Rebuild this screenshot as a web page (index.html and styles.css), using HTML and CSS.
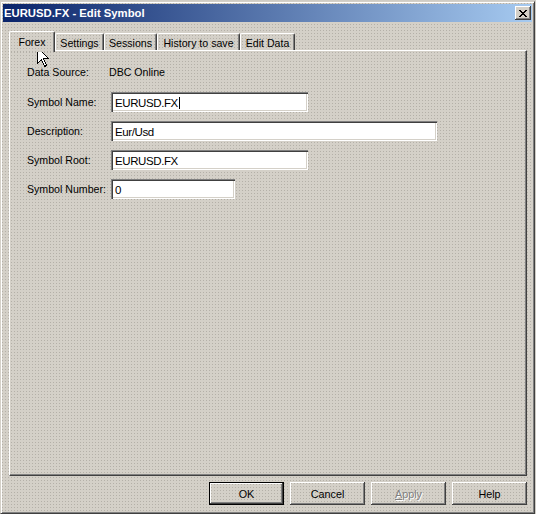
FILE: index.html
```html
<!DOCTYPE html>
<html lang="en">

<head>
  <meta charset="UTF-8" />
  <title>EURUSD.FX - Edit Symbol</title>
  <link rel="stylesheet" href="styles.css">
</head>

<body>
  <div class="window textured">
    <div class="titlebar">
      <span class="title">EURUSD.FX - Edit Symbol</span>
      <div class="close_button">
        <svg width="8" height="7" viewBox="0 0 8 7" shape-rendering="crispEdges">
          <path d="M0 0h2v1h-2zM6 0h2v1h-2zM1 1h2v1h-2zM5 1h2v1h-2zM2 2h4v1h-4zM3 3h2v1h-2zM2 4h4v1h-4zM1 5h2v1h-2zM5 5h2v1h-2zM0 6h2v1h-2zM6 6h2v1h-2z" fill="#000" />
        </svg>
      </div>
    </div>

    <div class="dialog">
      <div class="tabs">
        <div class="tab active textured">Forex</div>
        <div class="tab textured w-settings">Settings</div>
        <div class="tab textured w-sessions">Sessions</div>
        <div class="tab textured w-history">History to save</div>
        <div class="tab textured w-edit">Edit Data</div>
      </div>

      <div class="panel textured">
        <div class="row info">
          <span class="label">Data Source:</span>
          <span class="value">DBC Online</span>
        </div>

        <div class="row">
          <label class="label" for="symbolName">Symbol Name:</label>
          <div class="field w-name" id="symbolName">EURUSD.FX<span class="caret"></span></div>
        </div>

        <div class="row">
          <label class="label" for="description">Description:</label>
          <div class="field w-desc" id="description">Eur/Usd</div>
        </div>

        <div class="row">
          <label class="label" for="symbolRoot">Symbol Root:</label>
          <div class="field w-name" id="symbolRoot">EURUSD.FX</div>
        </div>

        <div class="row">
          <label class="label" for="symbolNumber">Symbol Number:</label>
          <div class="field w-number" id="symbolNumber">0</div>
        </div>
      </div>

      <div class="buttons">
        <div class="button default textured">OK</div>
        <div class="button textured">Cancel</div>
        <div class="button disabled textured"><span class="underline">A</span>pply</div>
        <div class="button textured">Help</div>
      </div>
    </div>
  </div>

  <!-- mouse pointer over the Forex tab -->
  <svg class="cursor" width="13" height="21" viewBox="0 0 13 21" shape-rendering="crispEdges">
    <path d="M0.5 0.5 L0.5 16.5 L4.5 12.5 L7.5 19.5 L9.5 18.5 L6.5 11.5 L11.5 11.5 Z" fill="#fff" stroke="#000" stroke-width="1" />
  </svg>
</body>

</html>
```

FILE: styles.css
```css
body {
  font-family: "Liberation Sans", Arial, sans-serif;
  font-size: 10.6px;
  color: #000;
  margin: 0;
  background: #cfccc5;
  overflow: hidden;
}

.textured {
  background-color: #d4d0c8;
  background-image: radial-gradient(circle, #b4b0a8 0.6px, transparent 0.9px);
  background-size: 3px 3px;
}

.window {
  width: 535px;
  height: 513px;
  margin-top: 1px;
  box-sizing: border-box;
  border: 1px solid;
  border-color: #d4d0c8 #404040 #404040 #d4d0c8;
  box-shadow: inset 1px 1px #fff, inset -1px -1px #808080;
  padding: 2px;
  display: flex;
  flex-direction: column;
}

.titlebar {
  height: 18px;
  flex-shrink: 0;
  background: linear-gradient(to right, #0a246a, #a6caf0);
  display: flex;
  align-items: center;
  justify-content: space-between;
  padding: 0 1px 0 1px;
}

.title {
  color: #fff;
  font-weight: bold;
  font-size: 11.3px;
}

.close_button {
  width: 16px;
  height: 14px;
  box-sizing: border-box;
  background: #d4d0c8;
  box-shadow: inset -1px -1px #404040, inset 1px 1px #fff, inset -2px -2px #808080;
  display: flex;
  align-items: center;
  justify-content: center;
  padding-right: 1px;
}

.dialog {
  flex: 1;
  display: flex;
  flex-direction: column;
  padding: 9px 5px 6px 6px;
}

.tabs {
  display: flex;
  align-items: flex-end;
  height: 19px;
  padding-left: 2px;
  position: relative;
  z-index: 1;
}

.tab {
  height: 17px;
  box-sizing: border-box;
  border-top: 1px solid #fff;
  border-left: 1px solid #fff;
  border-right: 1px solid #404040;
  box-shadow: inset -1px 0 #808080;
  border-radius: 2px 2px 0 0;
  display: flex;
  justify-content: center;
  align-items: center;
  padding-top: 2px;
}

.tab.active {
  width: 46px;
  height: 21px;
  margin-left: -2px;
  margin-bottom: -2px;
  padding-top: 0;
  padding-bottom: 1px;
}

.w-settings {
  width: 49px;
}

.w-sessions {
  width: 53px;
}

.w-history {
  width: 83px;
}

.w-edit {
  width: 55px;
}

.panel {
  flex: 1;
  border: 1px solid;
  border-color: #fff #404040 #404040 #fff;
  box-shadow: inset -1px -1px #808080;
  padding: 11px 0 0 17px;
  display: flex;
  flex-direction: column;
}

.row {
  display: flex;
  align-items: center;
  height: 20px;
  margin-bottom: 9px;
}

.row.info {
  margin-bottom: 10px;
}

.label {
  width: 84px;
  flex-shrink: 0;
}

.value {
  margin-left: -2px;
}

.field {
  height: 20px;
  box-sizing: border-box;
  background: #fff;
  box-shadow: inset 1px 1px #808080, inset 2px 2px #404040, inset -1px -1px #fff, inset -2px -2px #d4d0c8;
  padding: 1px 4px 0;
  display: flex;
  align-items: center;
  font-size: 11.5px;
  letter-spacing: -0.4px;
}

.w-name {
  width: 197px;
}

.w-desc {
  width: 326px;
}

.w-number {
  width: 124px;
}

.caret {
  display: inline-block;
  width: 1px;
  height: 12px;
  background: #000;
  margin-left: 1px;
}

.buttons {
  display: flex;
  justify-content: flex-end;
  gap: 6px;
  margin-top: 6px;
}

.button {
  width: 75px;
  height: 23px;
  box-sizing: border-box;
  box-shadow: inset -1px -1px #404040, inset 1px 1px #fff, inset -2px -2px #808080;
  display: flex;
  align-items: center;
  justify-content: center;
  font-size: 10.8px;
}

.button.default {
  border: 1px solid #000;
}

.button.disabled {
  color: #808080;
  text-shadow: 1px 1px #fff;
}

.underline {
  text-decoration: underline;
}

.cursor {
  position: absolute;
  left: 37px;
  top: 47px;
}
```
